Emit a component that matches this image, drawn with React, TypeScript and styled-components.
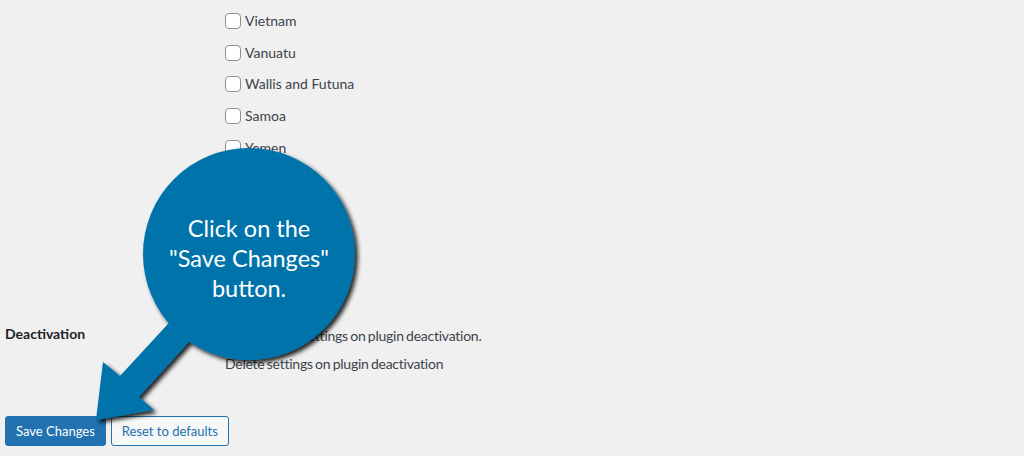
import styled, { createGlobalStyle } from "styled-components";

const GlobalStyle = createGlobalStyle`
  html, body {
    margin: 0;
    padding: 0;
    background: #f0f0f1;
  }
  body {
    font-family: "Segoe UI", Lato, "Noto Sans", sans-serif;
    font-size: 14px;
    color: #3c434a;
  }
`;

const countries = [
  "Vietnam",
  "Vanuatu",
  "Wallis and Futuna",
  "Samoa",
  "Yemen",
  "Mayotte",
  "South Africa",
  "Zambia",
  "Zimbabwe",
];

export default function App() {
  return (
    <>
      <GlobalStyle />
      <Page>
        <FormRow>
          <RowLabel />
          <CountryList>
            {countries.map((c) => (
              <CheckLine key={c}>
                <Box type="checkbox" />
                {c}
              </CheckLine>
            ))}
          </CountryList>
        </FormRow>
        <FormRow $spaced>
          <RowLabel>Deactivation</RowLabel>
          <Field>
            <CheckLine>
              <Box type="checkbox" />
              Delete all settings on plugin deactivation.
            </CheckLine>
            <Description>Delete settings on plugin deactivation</Description>
          </Field>
        </FormRow>
        <Submit>
          <Button $primary>Save Changes</Button>
          <Button>Reset to defaults</Button>
        </Submit>

        <Callout>
          <svg width="1024" height="456" viewBox="0 0 1024 456">
            <defs>
              <filter id="shade" x="-10%" y="-10%" width="130%" height="130%">
                <feDropShadow dx="3" dy="3" stdDeviation="2" floodColor="#000" floodOpacity="0.85" />
              </filter>
            </defs>
            <g fill="#0073aa" filter="url(#shade)">
              <circle cx="249" cy="254" r="106" />
              <path d="M194 296 L167 325 L120 376 L103 362 L96 420 L154 410 L139 397 L188 343 L215 314 Z" />
            </g>
          </svg>
          <CalloutText>
            Click on the
            <br />
            "Save Changes"
            <br />
            button.
          </CalloutText>
        </Callout>
      </Page>
    </>
  );
}

const Page = styled.div`
  position: relative;
  width: 1024px;
  height: 456px;
  overflow: hidden;
  padding-left: 5px;
  box-sizing: border-box;
`;

const FormRow = styled.div<{ $spaced?: boolean }>`
  display: grid;
  grid-template-columns: 220px 1fr;
  padding-top: ${(p) => (p.$spaced ? "34px" : "5px")};
`;

const RowLabel = styled.div`
  font-weight: 700;
  color: #1d2327;
  line-height: 18px;
`;

const CountryList = styled.div`
  display: flex;
  flex-direction: column;
`;

const CheckLine = styled.label`
  display: flex;
  align-items: center;
  height: 31.75px;
  line-height: 18px;
  white-space: nowrap;
`;

const Field = styled.div`
  display: flex;
  flex-direction: column;
  margin-top: -5px;
  word-spacing: -1px;
  letter-spacing: -0.25px;
`;

const Description = styled.p`
  margin: 0;
  line-height: 18px;
  padding-top: 3px;
  color: #3c434a;
`;

const Box = styled.input`
  appearance: none;
  width: 16px;
  height: 16px;
  margin: 0 4px 0 0;
  border: 1px solid #8c8f94;
  border-radius: 4px;
  background: #fff;
  box-sizing: border-box;
`;

const Submit = styled.div`
  display: flex;
  gap: 5px;
  margin-top: 43px;
`;

const Button = styled.button<{ $primary?: boolean }>`
  font-family: "Segoe UI", Lato, "Noto Sans", sans-serif;
  font-size: 13px;
  height: 30px;
  padding: 0 10px;
  border-radius: 3px;
  border: 1px solid #2271b1;
  background: ${(p) => (p.$primary ? "#2271b1" : "#f6f7f7")};
  color: ${(p) => (p.$primary ? "#fff" : "#2271b1")};
  cursor: pointer;
`;

const Callout = styled.div`
  position: absolute;
  left: 0;
  top: 0;
  pointer-events: none;
  svg {
    display: block;
  }
`;

const CalloutText = styled.div`
  position: absolute;
  left: 149px;
  top: 213px;
  width: 200px;
  text-align: center;
  font-family: Lato, "Open Sans", sans-serif;
  font-size: 23.5px;
  line-height: 30px;
  color: #fff;
`;
